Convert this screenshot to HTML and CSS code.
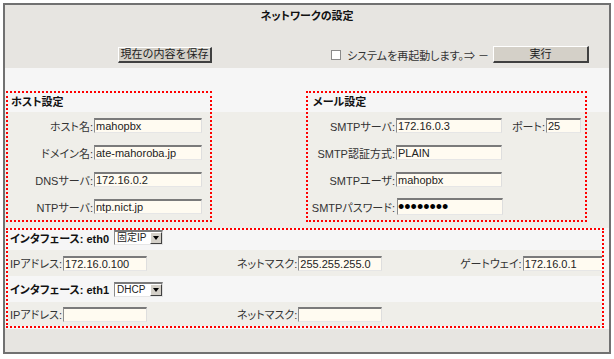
FILE: index.html
```html
<!DOCTYPE html>
<html lang="ja">
<head>
    <meta charset="UTF-8">
    <meta name="viewport" content="width=device-width, initial-scale=1.0">
    <title>ネットワークの設定</title>
    <link rel="stylesheet" href="styles.css">
</head>
<body>
    <div class="panel">
        <div class="head">
            <div class="title">ネットワークの設定</div>
            <div class="toolbar">
                <div class="toolbar-left">
                    <button class="btn btn-save">現在の内容を保存</button>
                </div>
                <div class="toolbar-right">
                    <input type="checkbox" class="check">
                    <span class="reboot-text">システムを再起動します。⇒ －</span>
                    <button class="btn btn-run">実行</button>
                </div>
            </div>
        </div>

        <div class="main">
            <div class="pair">
                <div class="box box-host">
                    <div class="box-title">ホスト設定</div>
                    <div class="field">
                        <label>ホスト名:</label>
                        <input type="text" value="mahopbx">
                    </div>
                    <div class="field">
                        <label>ドメイン名:</label>
                        <input type="text" value="ate-mahoroba.jp">
                    </div>
                    <div class="field">
                        <label>DNSサーバ:</label>
                        <input type="text" value="172.16.0.2">
                    </div>
                    <div class="field">
                        <label>NTPサーバ:</label>
                        <input type="text" value="ntp.nict.jp">
                    </div>
                </div>

                <div class="box box-mail">
                    <div class="box-title">メール設定</div>
                    <div class="field">
                        <label>SMTPサーバ:</label>
                        <input type="text" value="172.16.0.3">
                        <label class="port-label">ポート:</label>
                        <input type="text" class="port" value="25">
                    </div>
                    <div class="field">
                        <label>SMTP認証方式:</label>
                        <input type="text" value="PLAIN">
                    </div>
                    <div class="field">
                        <label>SMTPユーザ:</label>
                        <input type="text" value="mahopbx">
                    </div>
                    <div class="field">
                        <label>SMTPパスワード:</label>
                        <input type="password" class="password" value="mahopbx1">
                    </div>
                </div>
            </div>

            <div class="box box-iface">
                <div class="iface-head iface-first">
                    <span class="iface-name">インタフェース: eth0</span>
                    <span class="combo"><span class="combo-value">固定IP</span><span class="combo-arrow"></span></span>
                </div>
                <div class="iface-row">
                    <div class="cell"><label>IPアドレス:</label><input type="text" value="172.16.0.100"></div>
                    <div class="cell"><label>ネットマスク:</label><input type="text" value="255.255.255.0"></div>
                    <div class="cell"><label>ゲートウェイ:</label><input type="text" value="172.16.0.1"></div>
                </div>
                <div class="iface-head">
                    <span class="iface-name">インタフェース: eth1</span>
                    <span class="combo"><span class="combo-value">DHCP</span><span class="combo-arrow"></span></span>
                </div>
                <div class="iface-row iface-last">
                    <div class="cell"><label>IPアドレス:</label><input type="text" value=""></div>
                    <div class="cell"><label>ネットマスク:</label><input type="text" value=""></div>
                </div>
            </div>
        </div>

        <div class="foot"></div>
    </div>
</body>
</html>
```

FILE: styles.css
```css
* {
    box-sizing: border-box;
}
body {
    margin: 0;
    background: #fff;
    font-family: 'Liberation Sans', 'Noto Sans CJK JP', sans-serif;
    font-size: 11px;
    color: #333;
    font-feature-settings: "palt";
}
.panel {
    margin: 3px;
    width: 608px;
    height: 351px;
    border: 2px solid #717171;
    display: flex;
    flex-direction: column;
}
.head {
    height: 63px;
    background: #e7e5e1;
}
.title {
    height: 23px;
    line-height: 23px;
    text-align: center;
    font-weight: bold;
    color: #111;
}
.toolbar {
    margin-top: 18px;
    display: grid;
    grid-template-columns: 302px 1fr;
    align-items: center;
}
.toolbar-left {
    padding-left: 113px;
}
.toolbar-right {
    padding-left: 24px;
    display: flex;
    align-items: center;
}
.btn {
    background: #d4d0c8;
    border-top: 1px solid #fff;
    border-left: 1px solid #fff;
    border-right: 2px solid #404040;
    border-bottom: 2px solid #404040;
    font-family: inherit;
    font-size: 11px;
    color: #222;
    padding: 0;
    cursor: pointer;
}
.btn-save {
    width: 94px;
    height: 16px;
    line-height: 13px;
}
.btn-run {
    width: 96px;
    height: 17px;
    line-height: 14px;
}
.check {
    appearance: none;
    -webkit-appearance: none;
    width: 10px;
    height: 10px;
    margin: 0 6px 0 0;
    background: #fff;
    border: 1px solid #8a8a8a;
}
.reboot-text {
    margin-right: 4px;
    color: #333;
}
.main {
    height: 261px;
    background: #f6f6f6;
    padding-top: 23px;
}
.pair {
    display: flex;
    gap: 94px;
    padding-left: 1px;
    padding-bottom: 6px;
    background: linear-gradient(to bottom, #f6f6f6 21px, #efeee9 21px);
}
.box {
    border: 2px dotted #f00;
}
.box-host {
    width: 206px;
    height: 131px;
}
.box-mail {
    width: 281px;
    height: 131px;
}
.box-title {
    height: 19px;
    line-height: 19px;
    padding-left: 3px;
    font-weight: bold;
    color: #111;
}
.box-mail .box-title {
    padding-left: 5px;
}
.field {
    height: 27px;
    display: flex;
    align-items: center;
}
.field label {
    text-align: right;
    flex: none;
    padding-right: 1px;
}
.box-host .field label {
    width: 86px;
}
.box-mail .field label {
    width: 88px;
}
input[type="text"],
input[type="password"] {
    height: 15px;
    padding: 0 1px;
    margin: 0;
    background: #fffbf1;
    border-top: 2px solid #7a7a7a;
    border-left: 1px solid #8c8c8c;
    border-right: 1px solid #dedede;
    border-bottom: 1px solid #e6e6e6;
    font-family: inherit;
    font-size: 11px;
    color: #222;
    outline: none;
}
.box-host input {
    width: 108px;
}
.box-mail input {
    width: 106px;
}
.box-mail .field .port-label {
    width: auto;
    margin-left: 10px;
}
.box-mail input.port {
    width: 35px;
}
.box-mail input.password {
    height: 17px;
    margin-left: 1px;
    padding-left: 0;
    font-size: 18px;
    line-height: 13px;
    letter-spacing: 0;
    color: #000;
}
.box-iface {
    margin-left: 1px;
    width: 598px;
    height: 100px;
    overflow: hidden;
}
.iface-head {
    height: 26px;
    display: flex;
    align-items: center;
    padding-left: 2px;
    background: #f6f6f6;
}
.iface-first {
    height: 20px;
    padding-bottom: 5px;
}
.iface-name {
    font-weight: bold;
    color: #111;
    width: 104px;
}
.combo {
    display: inline-flex;
    align-items: center;
    width: 49px;
    height: 15px;
    background: #fff;
    border-top: 2px solid #7a7a7a;
    border-left: 1px solid #8c8c8c;
    border-right: 1px solid #dedede;
    border-bottom: 1px solid #e6e6e6;
}
.combo-value {
    flex: 1;
    padding-left: 2px;
    font-size: 10px;
    color: #222;
    line-height: 12px;
}
.combo-arrow {
    width: 12px;
    height: 12px;
    background: #d4d0c8;
    border-top: 1px solid #fff;
    border-left: 1px solid #fff;
    border-right: 1px solid #404040;
    border-bottom: 1px solid #404040;
    display: flex;
    align-items: center;
    justify-content: center;
}
.combo-arrow::after {
    content: "";
    border-left: 3px solid transparent;
    border-right: 3px solid transparent;
    border-top: 4px solid #000;
}
.iface-row {
    height: 26px;
    display: grid;
    grid-template-columns: 227px 223px 1fr;
    align-items: center;
    padding-left: 2px;
    background: #efeee9;
}
.iface-last {
    height: 24px;
}
.cell {
    display: flex;
    align-items: center;
    white-space: nowrap;
}
.cell label {
    padding-right: 1px;
}
.cell input {
    width: 84px;
    flex: none;
}
.foot {
    flex: 1;
    background: #e7e5e1;
}
```
